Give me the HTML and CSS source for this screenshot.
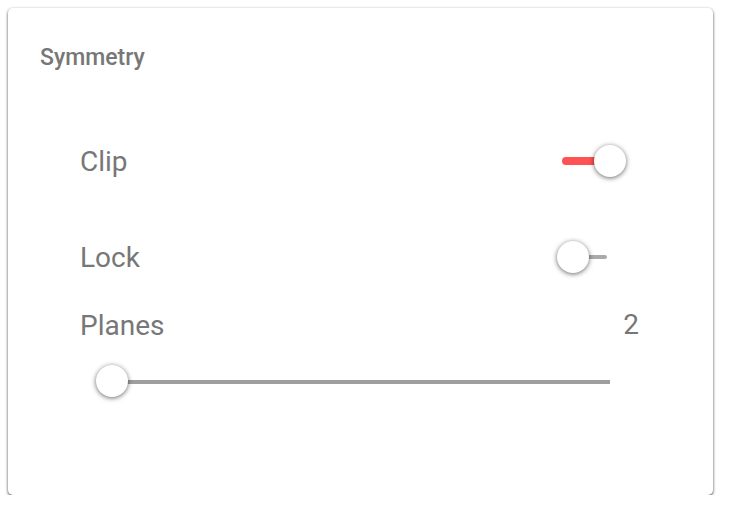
FILE: index.html
```
<!DOCTYPE html>
<html>
<head>
<meta charset="utf-8">
<link rel="stylesheet" href="styles.css">
</head>
<body>
<div class="card">
  <div class="title">Symmetry</div>
  <div class="rows">
    <div class="row toggle-row first">
      <span class="label">Clip</span>
      <div class="switch on"><div class="track"></div><div class="thumb"></div></div>
    </div>
    <div class="row toggle-row">
      <span class="label">Lock</span>
      <div class="switch"><div class="track"></div><div class="thumb"></div></div>
    </div>
    <div class="row value-row">
      <span class="label">Planes</span>
      <span class="value">2</span>
    </div>
    <div class="slider">
      <div class="slider-track"></div>
      <div class="slider-thumb"></div>
    </div>
  </div>
</div>
</body>
</html>
```
FILE: styles.css
```
html, body {
  margin: 0;
  padding: 0;
  background: #ffffff;
}
body {
  padding: 8px 0 0 8px;
  font-family: Roboto, "Liberation Sans", sans-serif;
  color: #777777;
}
.card {
  box-sizing: border-box;
  width: 705px;
  height: 487px;
  background: #fff;
  border-radius: 5px;
  box-shadow: 0 1px 3px rgba(0,0,0,0.55), 0 2px 3px rgba(0,0,0,0.25);
  padding: 36px 0 0 32px;
}
.title {
  font-size: 23px;
  font-weight: 500;
  line-height: 28px;
  height: 28px;
}
.rows {
  margin-left: 40px;
  width: 560px;
}
.row {
  display: flex;
  align-items: center;
  justify-content: space-between;
}
.toggle-row {
  height: 48px;
  margin-top: 48px;
}
.toggle-row.first {
  margin-top: 65px;
}
.label {
  font-size: 28px;
  line-height: 32px;
  padding-top: 2px;
}
.switch {
  position: relative;
  width: 70px;
  height: 32px;
  margin-right: 13px;
}
.track {
  position: absolute;
  left: 5px;
  right: 20px;
  top: 14px;
  height: 4px;
  border-radius: 2px;
  background: #aaaaaa;
}
.switch.on .track {
  top: 12px;
  height: 8px;
  border-radius: 4px;
  background: #ff5252;
}
.thumb {
  position: absolute;
  left: 0;
  top: 0;
  width: 32px;
  height: 32px;
  border-radius: 50%;
  background: #fff;
  box-shadow: 0 1px 5px rgba(0,0,0,0.6);
}
.switch.on .thumb {
  left: 37px;
}
.value-row {
  height: 32px;
  margin-top: 28px;
}
.value {
  font-size: 28px;
  line-height: 32px;
  margin-right: 1px;
}
.slider {
  position: relative;
  height: 32px;
  margin-top: 24px;
  margin-left: 16px;
  width: 514px;
}
.slider-track {
  position: absolute;
  left: 16px;
  right: 0;
  top: 15px;
  height: 4px;
  background: #9e9e9e;
}
.slider-thumb {
  position: absolute;
  left: 0;
  top: 0;
  width: 32px;
  height: 32px;
  border-radius: 50%;
  background: #fff;
  box-shadow: 0 1px 5px rgba(0,0,0,0.6);
}
```
